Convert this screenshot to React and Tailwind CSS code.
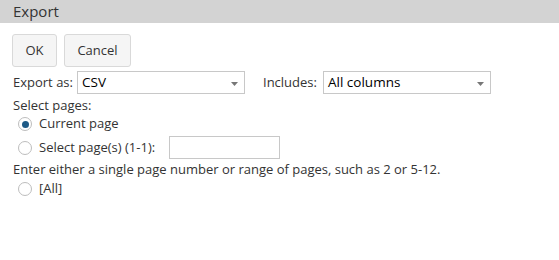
import React from "react";

const font = { fontFamily: '"Open Sans", "Noto Sans", sans-serif' };

function Arrow() {
  return (
    <svg width="7" height="4" viewBox="0 0 7 4" className="absolute right-[6px] top-[10px]">
      <path d="M0 0 H7 L3.5 4 Z" fill="#777" />
    </svg>
  );
}

function Select({ value, w }) {
  return (
    <div className={`relative h-[23px] ${w} border border-[#c8c8c8] bg-white pl-[4px] text-[13.5px] leading-[21px] text-black`}>
      {value}
      <Arrow />
    </div>
  );
}

function Radio({ checked }) {
  return (
    <div className="flex h-[14px] w-[14px] shrink-0 items-center justify-center rounded-full border border-[#bdbdbd] bg-white">
      {checked && <div className="h-[7px] w-[7px] rounded-full bg-[#1e5a86]" />}
    </div>
  );
}

export default function App() {
  return (
    <div className="h-[260px] w-[559px] bg-white text-[#333] text-[13px]" style={font}>
      <div className="h-[23px] bg-[#d3d3d3] pl-[13px] text-[15px] leading-[23px] text-[#333]">Export</div>
      <div className="px-[12px]">
        <div className="mt-[11px] flex gap-[7px]">
          <button className="h-[33px] w-[45px] rounded-[3px] border border-[#d9d9d9] bg-[#f5f5f5] text-[13px] text-[#333]">OK</button>
          <button className="h-[33px] w-[67px] rounded-[3px] border border-[#d9d9d9] bg-[#f5f5f5] text-[13px] text-[#333]">Cancel</button>
        </div>
        <div className="mt-[4px] flex items-center">
          <span className="w-[65px] pl-[1px]">Export as:</span>
          <Select value="CSV" w="w-[168px]" />
          <span className="ml-[18px] w-[60px]">Includes:</span>
          <Select value="All columns" w="w-[168px]" />
        </div>
        <div className="mt-[2px] pl-[1px] leading-[18px]">Select pages:</div>
        <div className="mt-0 flex h-[20px] items-center gap-[7px] pl-[6px]">
          <Radio checked />
          <span>Current page</span>
        </div>
        <div className="mt-[2px] flex h-[23px] items-center gap-[7px] pl-[6px]">
          <Radio />
          <span>Select page(s) (1-1):</span>
          <div className="ml-[7px] h-[23px] w-[111px] border border-[#c8c8c8] bg-white" />
        </div>
        <div className="mt-0 pl-[1px] leading-[20px]">Enter either a single page number or range of pages, such as 2 or 5-12.</div>
        <div className="mt-0 flex h-[20px] items-center gap-[7px] pl-[6px]">
          <Radio />
          <span>[All]</span>
        </div>
      </div>
    </div>
  );
}
